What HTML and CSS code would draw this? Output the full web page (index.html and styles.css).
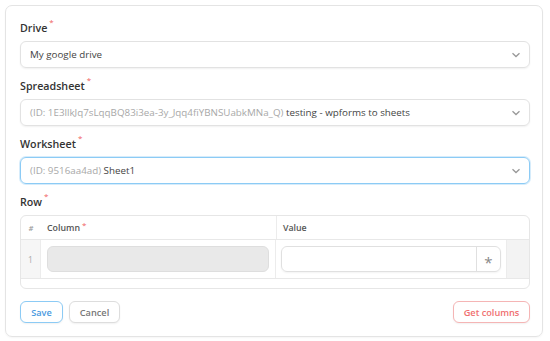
FILE: index.html
```html
<!DOCTYPE html>
<html>
<head>
<meta charset="utf-8">
<link rel="stylesheet" href="styles.css">
</head>
<body>
<div class="card">
  <div class="field">
    <div class="label">Drive<span class="req">*</span></div>
    <div class="select"><span class="val">My google drive</span><svg class="chev" viewBox="0 0 10 6"><path d="M1.5 1.2 L5 4.5 L8.5 1.2" /></svg></div>
  </div>
  <div class="field">
    <div class="label">Spreadsheet<span class="req">*</span></div>
    <div class="select"><span class="val"><span class="muted">(ID: 1E3llkJq7sLqqBQ83i3ea-3y_Jqq4fiYBNSUabkMNa_Q)</span> testing - wpforms to sheets</span><svg class="chev" viewBox="0 0 10 6"><path d="M1.5 1.2 L5 4.5 L8.5 1.2" /></svg></div>
  </div>
  <div class="field">
    <div class="label">Worksheet<span class="req">*</span></div>
    <div class="select focus"><span class="val"><span class="muted">(ID: 9516aa4ad)</span> Sheet1</span><svg class="chev" viewBox="0 0 10 6"><path d="M1.5 1.2 L5 4.5 L8.5 1.2" /></svg></div>
  </div>
  <div class="field">
    <div class="label">Row<span class="req">*</span></div>
    <div class="table">
      <div class="thead">
        <div class="c-num">#</div>
        <div class="c-col">Column<span class="req">*</span></div>
        <div class="c-val">Value</div>
        <div class="c-end"></div>
      </div>
      <div class="trow">
        <div class="c-num">1</div>
        <div class="c-col"><div class="ginput"></div></div>
        <div class="c-val"><div class="vinput"><div class="vtext"></div><div class="star">*</div></div></div>
        <div class="c-end"></div>
      </div>
      <div class="tfoot"></div>
    </div>
  </div>
  <div class="actions">
    <button class="btn save">Save</button>
    <button class="btn cancel">Cancel</button>
    <button class="btn getcols">Get columns</button>
  </div>
</div>
</body>
</html>
```
FILE: styles.css
```css
* { box-sizing: border-box; }
html, body { margin: 0; padding: 0; background: #fff; }
body {
  padding: 5px 7px 4px 5px;
  font-family: "Open Sans", "Liberation Sans", sans-serif;
  font-size: 10px;
  color: #333;
}
.card {
  border: 1px solid #e4e4e4;
  border-radius: 7px;
  padding: 15px 12px 12px 14px;
  height: 332px;
  box-shadow: 0 1px 2px rgba(0,0,0,0.04);
}
.field { margin-bottom: 11px; }
.field:last-of-type { margin-bottom: 0; }
.label {
  font-size: 10.7px;
  font-weight: 600;
  color: #333;
  height: 15px;
  line-height: 15px;
  margin-bottom: 5px;
}
.req {
  color: #f06060;
  font-size: 8px;
  vertical-align: top;
  line-height: 8px;
  margin-left: 2px;
  position: relative;
  top: -3px;
  font-weight: 400;
}
.select {
  height: 27px;
  border: 1px solid #e2e2e2;
  border-radius: 6px;
  display: flex;
  align-items: center;
  justify-content: space-between;
  padding: 0 8px 0 9px;
  box-shadow: 0 1px 2px rgba(0,0,0,0.06);
  font-size: 9.8px;
  color: #444;
  white-space: nowrap;
}
.select.focus { border-color: #8ccbf5; box-shadow: 0 0 0 1px #d6ecfb; }
.muted { color: #a8a8a8; }
.chev { width: 10px; height: 6px; }
.chev path { fill: none; stroke: #999; stroke-width: 1.3; }
.table {
  border: 1px solid #e6e6e6;
  border-radius: 6px;
  overflow: hidden;
  margin-top: 1px;
}
.thead, .trow { display: flex; }
.thead { height: 24px; border-bottom: 1px solid #e8e8e8; align-items: stretch; font-size: 8.8px; color: #555; font-weight: 600; }
.thead > div { display: flex; align-items: center; }
.c-num { width: 20px; flex: none; justify-content: center; display: flex; align-items: center; font-size: 7.5px; color: #999; font-style: italic; }
.c-col { width: 235px; flex: none; padding-left: 6px; border-right: 1px solid #ececec; }
.c-val { flex: 1; padding-left: 6px; }
.c-end { width: 23px; flex: none; }
.thead .c-col { border-right: none; }
.thead .c-val { border-left: 1px solid #ececec; }
.trow { height: 39px; border-bottom: 1px solid #e8e8e8; }
.trow > div { display: flex; align-items: center; }
.trow .c-num { background: #f6f6f6; border-right: 1px solid #ececec; color: #aaa; font-size: 8.5px; font-style: normal; }
.trow .c-end { background: #f3f3f3; border-left: 1px solid #ececec; }
.trow .c-col { padding: 0 6px 0 6px; }
.trow .c-val { padding: 0 5px 0 5px; }
.ginput { width: 100%; height: 26px; background: #e9e9e9; border: 1px solid #dedede; border-radius: 6px; }
.vinput { width: 100%; height: 26px; border: 1px solid #e0e0e0; border-radius: 6px; display: flex; box-shadow: 0 1px 2px rgba(0,0,0,0.05); }
.vtext { flex: 1; }
.star { width: 24px; border-left: 1px solid #e0e0e0; display: flex; align-items: center; justify-content: center; color: #888; font-size: 15px; padding-top: 5px; }
.tfoot { height: 9px; }
.actions { display: flex; gap: 6px; margin-top: 12px; }
.btn {
  font-family: inherit;
  font-size: 9.2px;
  font-weight: 600;
  height: 22px;
  border-radius: 6px;
  background: #fff;
  border: 1px solid #ddd;
  padding: 0 10px;
  box-shadow: 0 1px 2px rgba(0,0,0,0.06);
  cursor: pointer;
}
.save { color: #4a9ae0; border-color: #8ccbf5; width: 43px; padding: 0; }
.cancel { color: #777; width: 51px; padding: 0; }
.getcols { margin-left: auto; color: #f07070; border-color: #f5b5b5; width: 77px; padding: 0; }
```
